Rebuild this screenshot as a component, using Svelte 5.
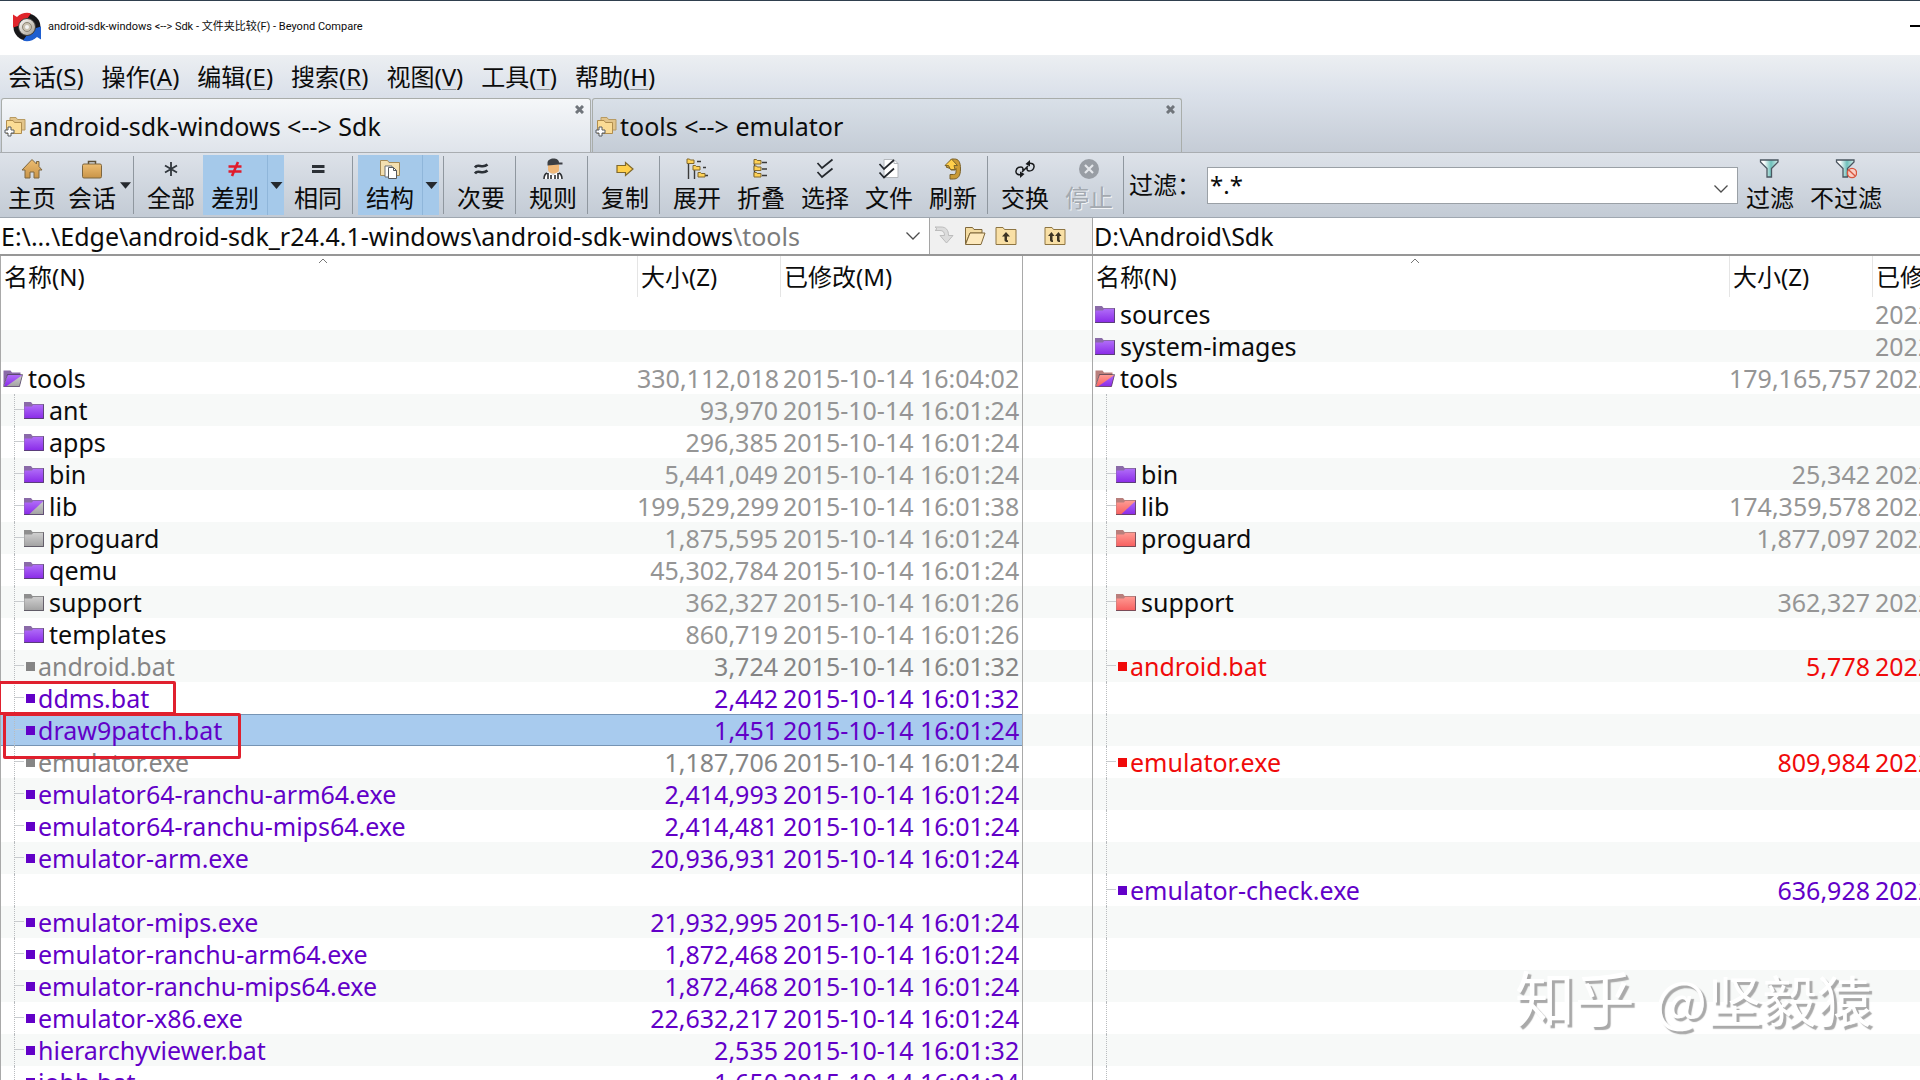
<script>
  const menus = [
    ['会话', 'S'], ['操作', 'A'], ['编辑', 'E'], ['搜索', 'R'],
    ['视图', 'V'], ['工具', 'T'], ['帮助', 'H']
  ];

  const tabs = [
    { title: 'android-sdk-windows <--> Sdk', active: true },
    { title: 'tools <--> emulator', active: false }
  ];

  const tools = [
    { icon: 'home', label: '主页' },
    { icon: 'case', label: '会话', narrow: true, arrow: 'small' },
    { sep: true },
    { icon: 'all', label: '全部' },
    { icon: 'diff', label: '差别', on: true, arrow: 'side' },
    { icon: 'same', label: '相同' },
    { sep: true },
    { icon: 'structure', label: '结构', on: true, arrow: 'side' },
    { sep: true },
    { icon: 'minor', label: '次要' },
    { sep: true },
    { icon: 'rules', label: '规则' },
    { sep: true },
    { icon: 'copy', label: '复制' },
    { sep: true },
    { icon: 'expand', label: '展开' },
    { icon: 'collapse', label: '折叠' },
    { icon: 'select', label: '选择' },
    { icon: 'files', label: '文件' },
    { icon: 'refresh', label: '刷新' },
    { sep: true },
    { icon: 'swap', label: '交换' },
    { icon: 'stop', label: '停止', disabled: true },
    { sep: true }
  ];

  const d = (t) => '2015-10-14 16:' + t;
  const dir = (name, kind, size, date) => ({ name, kind, size, date, level: 1 });
  const file = (name, tone, size, date, selected = false) => ({ name, tone, size, date, selected, level: 1 });
  const gap = { level: 1 };
  const none = { level: 0 };

  const left = [
    none,
    none,
    { name: 'tools', kind: 'purple-gray', open: true, size: '330,112,018', date: d('04:02'), level: 0 },
    dir('ant', 'purple', '93,970', d('01:24')),
    dir('apps', 'purple', '296,385', d('01:24')),
    dir('bin', 'purple', '5,441,049', d('01:24')),
    dir('lib', 'purple-gray', '199,529,299', d('01:38')),
    dir('proguard', 'gray', '1,875,595', d('01:24')),
    dir('qemu', 'purple', '45,302,784', d('01:24')),
    dir('support', 'gray', '362,327', d('01:26')),
    dir('templates', 'purple', '860,719', d('01:26')),
    file('android.bat', 'older', '3,724', d('01:32')),
    file('ddms.bat', 'orphan', '2,442', d('01:32')),
    file('draw9patch.bat', 'orphan', '1,451', d('01:24'), true),
    file('emulator.exe', 'older', '1,187,706', d('01:24')),
    file('emulator64-ranchu-arm64.exe', 'orphan', '2,414,993', d('01:24')),
    file('emulator64-ranchu-mips64.exe', 'orphan', '2,414,481', d('01:24')),
    file('emulator-arm.exe', 'orphan', '20,936,931', d('01:24')),
    gap,
    file('emulator-mips.exe', 'orphan', '21,932,995', d('01:24')),
    file('emulator-ranchu-arm64.exe', 'orphan', '1,872,468', d('01:24')),
    file('emulator-ranchu-mips64.exe', 'orphan', '1,872,468', d('01:24')),
    file('emulator-x86.exe', 'orphan', '22,632,217', d('01:24')),
    file('hierarchyviewer.bat', 'orphan', '2,535', d('01:32')),
    file('jobb.bat', 'orphan', '1,650', d('01:24'))
  ];

  const y = '2022';
  const right = [
    { name: 'sources', kind: 'purple', date: y, level: 0 },
    { name: 'system-images', kind: 'purple', date: y, level: 0 },
    { name: 'tools', kind: 'red-purple', open: true, size: '179,165,757', date: y, level: 0 },
    gap,
    gap,
    dir('bin', 'purple', '25,342', y),
    dir('lib', 'red-purple', '174,359,578', y),
    dir('proguard', 'red', '1,877,097', y),
    gap,
    dir('support', 'red', '362,327', y),
    gap,
    file('android.bat', 'newer', '5,778', y),
    gap,
    gap,
    file('emulator.exe', 'newer', '809,984', y),
    gap,
    gap,
    gap,
    file('emulator-check.exe', 'orphan', '636,928', y),
    gap,
    gap,
    gap,
    gap,
    gap,
    gap
  ];

  let filter = $state('*.*');
  let rightPath = $state('D:\\Android\\Sdk');
</script>

{#snippet folder(kind, open)}
  {@const a = kind.split('-')[0]}
  {@const b = kind.split('-')[1] ?? a}
  <svg class="folder" viewBox="0 0 20 17" aria-hidden="true">
    {#if open}
      <path d="M.5 16V.5h7l1.500 2H17.500V6H4Z" class="back-{a}" />
      <path d="M1 16 4.500 5h15L16.500 16.500H1Z" fill="url(#f-{a})" />
      <path d="M3 16.500 19.500 5 16.500 16.500Z" fill="url(#f-{b})" />
      <path d="M.5 16.500 4.500 4.500h15L16.500 16.500Z" class="edge" />
    {:else}
      <path d="M0 17V0h7l1.500 2H20v15Z" class="back-{a}" />
      <path d="M.5 4.500H8L9 3h10.500v13.500H.5Z" fill="url(#f-{a})" />
      {#if b !== a}<path d="M19.500 3v13.500H5Z" fill="url(#f-{b})" />{/if}
      <path d="M0 16.500H19.500V2.500" class="edge" />
    {/if}
  </svg>
{/snippet}

{#snippet chevron()}
  <svg class="chevron" viewBox="0 0 16 10" aria-hidden="true"><path d="M1.500 1.500 8 8l6.500-6.500" /></svg>
{/snippet}

{#snippet funnel()}
  <path d="M1.500 2h17.500v2l-6.500 6.500V19H8v-8.500L1.500 4Z" fill="url(#funnel)" stroke="#4b5660" stroke-width="1.300" />
{/snippet}

{#snippet icon(name)}
  <svg class="icon" viewBox="0 0 22 22" aria-hidden="true">
    {#if name === 'home'}
      <path d="M11 1.500 1 12h3v8h5v-6h4v6h5v-8h3l-3-3.500V3.500h-2.500v2.500Z" fill="url(#tan)" stroke="#7d6640" />
    {:else if name === 'case'}
      <path d="M7.500 6V3.500h7V6" fill="none" stroke="#5d5038" stroke-width="1.500" />
      <rect x="1.500" y="6" width="19" height="14" rx="1.500" fill="url(#tan)" stroke="#7d6640" />
    {:else if name === 'all'}
      <path d="M11 4v14M5 7.500l12 7M17 7.500l-12 7" stroke="#30363c" stroke-width="1.800" />
    {:else if name === 'diff'}
      <path d="M4.500 8.500h13M4.500 13.500h13M14 4 8 18" stroke="#e01b2c" stroke-width="2.600" />
    {:else if name === 'same'}
      <path d="M5 8.500h12.500M5 13.500h12.500" stroke="#2b3036" stroke-width="3" />
    {:else if name === 'structure'}
      <path d="M1.500 17.500v-15h7l1.500 2h10.500v13Z" fill="#f3dfb0" stroke="#a48a57" />
      <path d="M6 8h7v11H6Z" fill="#fff" stroke="#6d7175" />
      <path d="M9.500 9.500h5l3 3v8h-8Z" fill="#fff" stroke="#55595d" />
      <path d="M14.500 9.500v3h3" fill="none" stroke="#55595d" />
    {:else if name === 'minor'}
      <path d="M5 9.500c3-5 7 2 12.500-3M5 15.500c3-5 7 2 12.500-3" fill="none" stroke="#2b3036" stroke-width="2.600" />
    {:else if name === 'rules'}
      <path d="M6 6.500h11v5c0 3-3 4-5.500 4S6 14 6 11.500Z" fill="#f0b878" />
      <path d="M5.500 7.500V5c0-3 3-4.500 6-4.500S17 2 17 4.500h3.500v2H17Z" fill="#3c3f44" />
      <path d="M1.500 21c0-4 2-6 5.500-6.500l4 3 4-3c3.500.5 5.500 2.500 5.500 6.500Z" fill="#fff" />
      <path d="M2 21c0-3 1-5 3-6M6 21v-6M9 21v-4M13 21v-4M16 21v-6M20 21c0-3-1-5-3-6" fill="none" stroke="#2c2f33" stroke-width="1.600" />
    {:else if name === 'copy'}
      <path d="M3 7.500h8.500V4.500L19 11l-7.500 6.500v-3H3Z" fill="#ffcf4a" stroke="#80682b" stroke-width="1.200" />
    {:else if name === 'expand'}
      <path d="M2.500 5v16M8.500 12v9M11 3.500h4M17 9.500h3M19 17.500h3" fill="none" stroke="#3a3a3a" stroke-width="1.400" />
      <path d="M1 1h2.500l.8 1H8v3.500H1ZM7 7.500h2.500l.8 1H14V12H7ZM12 14.500h2.500l.8 1H19V19h-7Z" fill="#ffd257" stroke="#82692c" />
    {:else if name === 'collapse'}
      <path d="M4.500 5v13M12 4.500h5M12 11h5M12 17.500h5" fill="none" stroke="#3a3a3a" stroke-width="1.400" />
      <path d="M4 1.500h2.500l.8 1H11V6H4ZM4 8h2.500l.8 1H11v3.500H4ZM4 14.500h2.500l.8 1H11V19H4Z" fill="#ffd257" stroke="#82692c" />
    {:else if name === 'select'}
      <path d="m3.500 5 4.500 5L18.500 1.500M3.500 14l4.500 5L18.500 10.500" fill="none" stroke="#24282d" stroke-width="1.700" />
    {:else if name === 'files'}
      <path d="M6 1.500h10l4 4v14H6Z" fill="#fff" stroke="#b4b8bd" />
      <path d="M16 1.500v4h4" fill="none" stroke="#b4b8bd" />
      <path d="m1.500 6 4.500 5L16 2M1.500 14.500l4.500 5L16 10.500" fill="none" stroke="#24282d" stroke-width="1.700" />
    {:else if name === 'refresh'}
      <path d="M12.500 1c4 0 6 3 6 10s-2.500 10-7 10H8v-4.500h3.500c2 0 2.500-1 2.500-3v-3l-1 1.500H9l-1-1.500-4-1.500L9.500 1Z" fill="#c99a35" stroke="#7b6128" />
      <path d="M9.500 1 3 7.500h3.500l2 4h4.500l-1-4h3.500Z" fill="#ffcf4a" stroke="#80682b" />
    {:else if name === 'swap'}
      <path d="M14 5.500c3.500-1 6.500.5 6 3.500s-3 4-5 4-2.500-2-1.500-3.500M8 16.500c-3.500 1-6.500-.5-6-3.500s3-4 5-4 2.500 2 1.500 3.500M14 8l-6 6" fill="none" stroke="#17191b" stroke-width="1.500" />
      <path d="M11.500 6 16 2v6.500ZM10.500 16 6 20v-6.500Z" fill="#17191b" />
    {:else if name === 'stop'}
      <circle cx="11" cy="11" r="10" fill="#989da4" />
      <path d="m7 7 8 8M15 7l-8 8" stroke="#e4e7eb" stroke-width="2.200" />
    {:else if name === 'filter'}
      {@render funnel()}
    {:else if name === 'nofilter'}
      {@render funnel()}
      <circle cx="17" cy="15" r="4.600" fill="#f9cfc6" stroke="#d8563f" stroke-width="1.400" />
      <path d="m13.800 12 6.400 6" stroke="#d8563f" stroke-width="1.400" />
    {:else if name === 'tab'}
      <path d="M6 15V2.500h6l1.500 2H21V15Z" fill="#e2c48a" stroke="#b79a62" />
      <path d="M2.500 18.500V5.500H9l1.500 2h7v11Z" fill="#fbdc95" stroke="#b08d4e" />
      <path d="M4 12h3v3h3v3H7v3H4v-3H1v-3h3Z" fill="#fff" stroke="#555b61" />
    {:else if name === 'go'}
      <path d="M2 2h6c5 0 7.500 3 7.500 8.500H20L13.500 18 7 10.500h4.500C11.500 7 10 5.500 7 5.500H2l2-1.700Z" fill="#dcdcdc" stroke="#bcbcbc" />
    {:else if name === 'browse'}
      <path d="M1.500 19V2.500h7l1.500 2h8V8H6Z" fill="#f4dca2" stroke="#80683a" />
      <path d="M1.500 19.500 6 8h15l-4 11.500Z" fill="#fde9bd" stroke="#80683a" />
    {:else if name === 'up' || name === 'upboth'}
      <path d="M1 19.500v-17h7l1.500 2H21v15Z" fill="#f9e0a6" stroke="#8e7542" />
      {#if name === 'up'}
        <path d="m11 7-4 4.500h2.500V15c0 1.500 1 2 3.500 2v-1.800h-1v-3.700h3Z" fill="#3d3424" />
      {:else}
        <path d="m7.500 7-3.500 4h2v4c0 1.500 1 2 3 2v-1.800h-.5V11h2ZM14.500 7 11 11h2v4c0 1.500 1 2 3 2v-1.800h-.5V11h2Z" fill="#3d3424" />
      {/if}
    {/if}
  </svg>
{/snippet}

{#snippet pane(rows, label)}
  <div class="pane">
    <svg class="sort" viewBox="0 0 10 6" aria-hidden="true"><path d="M1 5l4-4 4 4" /></svg>
    <table aria-label={label}>
      <colgroup><col /><col class="c-size" /><col class="c-date" /></colgroup>
      <thead>
        <tr><th scope="col">名称(N)</th><th scope="col">大小(Z)</th><th scope="col">已修改(M)</th></tr>
      </thead>
      <tbody>
        {#each rows as r}
          <tr class={r.tone ?? 'dir'} class:selected={r.selected}>
            <td>
              <div class="name">
                {#if r.level}<span class="guide" class:branch={r.name}></span>{/if}
                {#if r.kind}{@render folder(r.kind, r.open)}{:else if r.name}<span class="dot"></span>{/if}
                <span>{r.name ?? ''}</span>
              </div>
            </td>
            <td class="size">{r.size ?? ''}</td>
            <td class="date">{r.date ?? ''}</td>
          </tr>
        {/each}
      </tbody>
    </table>
  </div>
{/snippet}

<svg class="defs" aria-hidden="true">
  <defs>
    <linearGradient id="f-purple" x1="0" y1="0" x2="0" y2="1"><stop offset="0" stop-color="#b06cf8" /><stop offset="1" stop-color="#8a2be8" /></linearGradient>
    <linearGradient id="f-gray" x1="0" y1="0" x2="0" y2="1"><stop offset="0" stop-color="#cfcfcf" /><stop offset="1" stop-color="#a2a2a2" /></linearGradient>
    <linearGradient id="f-red" x1="0" y1="0" x2="0" y2="1"><stop offset="0" stop-color="#ff9a92" /><stop offset="1" stop-color="#f75f5f" /></linearGradient>
    <linearGradient id="tan" x1="0" y1="0" x2="0" y2="1"><stop offset="0" stop-color="#edbd72" /><stop offset="1" stop-color="#c99447" /></linearGradient>
    <linearGradient id="funnel" x1="0" y1="0" x2="1" y2="0"><stop offset="0.200" stop-color="#fff" /><stop offset="0.600" stop-color="#6fc0bb" /><stop offset="1" stop-color="#d6efec" /></linearGradient>
    <linearGradient id="disc" x1="0" y1="0" x2="1" y2="1"><stop offset="0" stop-color="#fff" /><stop offset="1" stop-color="#a39a88" /></linearGradient>
  </defs>
</svg>

<div class="app">
  <header class="titlebar">
    <svg class="logo" viewBox="0 0 28 30" aria-hidden="true">
      <circle cx="14" cy="15" r="13.500" fill="#17171a" />
      <path d="M0 2.500 4 5C8 1 14 0 18 1.500L14 7C9 7 7 10 6.500 13.500L0 15.500Z" fill="#e0252b" />
      <path d="M28 27.500 24 25c-4 4-10 5-14 3.500L14 23c5 0 7-3 7.500-6.500L28 14.500Z" fill="#1f5fd0" />
      <circle cx="14" cy="15" r="8.500" fill="url(#disc)" stroke="#3c3a38" />
      <circle cx="14" cy="15" r="4.500" fill="#c9c2b2" stroke="#8b8474" />
      <circle cx="14" cy="15" r="2" fill="#f4f4f4" />
    </svg>
    <h1>android-sdk-windows &lt;--&gt; Sdk - 文件夹比较(F) - Beyond Compare</h1>
    <button class="minimize" aria-label="最小化"></button>
  </header>

  <div class="strip">
    <nav class="menu">
      {#each menus as [label, key]}
        <button>{label}(<u>{key}</u>)</button>
      {/each}
    </nav>
    <div class="tabs" role="tablist">
      {#each tabs as t}
        <div class="tab" class:active={t.active}>
          <button class="tab-title" role="tab" aria-selected={t.active}>{@render icon('tab')}{t.title}</button>
          <button class="close" aria-label="关闭">
            <svg viewBox="0 0 9 9" aria-hidden="true"><path d="m1 1 7 7M8 1 1 8" /></svg>
          </button>
        </div>
      {/each}
    </div>
  </div>

  <div class="toolbar" role="toolbar">
    {#each tools as t}
      {#if t.sep}
        <span class="sep"></span>
      {:else}
        <div class="tool" class:on={t.on}>
          <button class="tool-main" class:narrow={t.narrow} disabled={t.disabled}>{@render icon(t.icon)}{t.label}</button>
          {#if t.arrow}
            <button class="arrow {t.arrow}" aria-label="{t.label}选项">
              <svg viewBox="0 0 12 7" aria-hidden="true"><path d="M0 0h12L6 7Z" /></svg>
            </button>
          {/if}
        </div>
      {/if}
    {/each}
    <label for="filter">过滤：</label>
    <div class="filter">
      <input id="filter" bind:value={filter} />
      <button aria-label="过滤列表">{@render chevron()}</button>
    </div>
    <button class="tool-main">{@render icon('filter')}过滤</button>
    <button class="tool-main wide">{@render icon('nofilter')}不过滤</button>
  </div>

  <div class="paths columns">
    <div class="path-left">
      <button class="path" aria-haspopup="listbox">
        <span>E:\...\Edge\android-sdk_r24.4.1-windows\android-sdk-windows<span class="dim">\tools</span></span>
        {@render chevron()}
      </button>
      <div class="path-tools">
        <button disabled aria-label="转到">{@render icon('go')}</button>
        <button aria-label="浏览">{@render icon('browse')}</button>
        <button aria-label="上一级">{@render icon('up')}</button>
      </div>
    </div>
    <div class="both"><button aria-label="两侧上一级">{@render icon('upboth')}</button></div>
    <input class="path-right" aria-label="右侧文件夹" bind:value={rightPath} />
  </div>

  <main class="columns">
    {@render pane(left, '左侧文件夹')}
    <div class="gutter"></div>
    {@render pane(right, '右侧文件夹')}
    <div class="mark mark-ddms"></div>
    <div class="mark mark-draw"></div>
  </main>

  <div class="watermark"><span class="brand">知乎</span> @坚毅猿</div>
</div>

<style>
  :global(body) {
    margin: 0;
    background: #fff;
  }
  .app {
    position: relative;
    display: flex;
    flex-direction: column;
    height: 100vh;
    overflow: hidden;
    font-family: "Noto Sans", "Noto Sans CJK SC", sans-serif;
    font-size: 24px;
    line-height: 32px;
    color: #0c0c0c;
  }
  .defs {
    position: absolute;
    width: 0;
    height: 0;
  }
  button,
  input {
    margin: 0;
    padding: 0;
    border: 0;
    border-radius: 0;
    outline: 0;
    background: none;
    color: inherit;
    font: inherit;
  }
  .icon {
    display: block;
    flex: none;
    width: 22px;
    height: 22px;
  }

  .titlebar {
    box-sizing: border-box;
    flex: none;
    display: flex;
    align-items: flex-start;
    gap: 7px;
    height: 55px;
    padding: 11px 0 0 13px;
    border-top: 1px solid #2f3f4e;
    background: #fff;
  }
  .logo {
    width: 28px;
    height: 30px;
  }
  h1 {
    flex: 1;
    margin: 0;
    font-family: Roboto, "Noto Sans CJK SC", sans-serif;
    font-size: 11px;
    font-weight: 400;
    line-height: 30px;
  }
  .minimize {
    width: 10px;
    height: 15px;
    border-bottom: 2px solid #000;
  }

  .strip {
    flex: none;
    background: linear-gradient(#eceff2, #dbe1ea 40%, #c5ccd6);
    border-bottom: 1px solid #a9adb1;
  }
  .menu {
    display: flex;
    gap: 18px;
    padding: 6px 8px 5px;
  }
  .menu u {
    text-decoration-color: #8a9096;
    text-decoration-thickness: 1px;
    text-underline-offset: 3px;
  }
  .tabs {
    display: flex;
    gap: 1px;
    padding-left: 1px;
  }
  .tab {
    box-sizing: border-box;
    display: flex;
    justify-content: space-between;
    align-items: flex-start;
    width: 590px;
    height: 54px;
    padding: 0 4px 0 2px;
    border: 1px solid #a9adaa;
    border-bottom: 0;
    border-radius: 3px 3px 0 0;
    background: linear-gradient(#d9e0e8, #c4ccd6);
  }
  .tab.active {
    margin-bottom: -1px;
    background: linear-gradient(#f5f7f9, #dfe4eb);
  }
  .tab-title {
    display: flex;
    align-items: center;
    gap: 3px;
    height: 54px;
    font-size: 25px;
    white-space: pre;
  }
  .close {
    width: 14px;
    height: 20px;
  }
  .close svg {
    display: block;
    width: 9px;
    height: 9px;
    margin: auto;
  }
  .close path {
    stroke: #70757b;
    stroke-width: 3;
  }

  .toolbar {
    box-sizing: border-box;
    flex: none;
    display: flex;
    align-items: center;
    height: 65px;
    padding-right: 30px;
    border-bottom: 1px solid #9fa7b0;
    background: linear-gradient(#dde2e9, #c3cbd5);
  }
  .tool {
    display: flex;
  }
  .tool-main {
    display: flex;
    flex-direction: column;
    align-items: center;
    flex: none;
    gap: 2px;
    width: 64px;
    height: 60px;
    padding-top: 3px;
    box-sizing: border-box;
    white-space: nowrap;
  }
  .tool-main.narrow {
    width: 56px;
  }
  .tool-main.wide {
    width: 88px;
  }
  .tool-main:disabled {
    color: #a3a9b0;
    text-shadow: 1px 1px #f1f3f5;
  }
  .on .tool-main,
  .on .arrow {
    background: #a5c9ea;
  }
  .arrow {
    display: flex;
    align-items: center;
    justify-content: center;
    width: 11px;
  }
  .arrow svg {
    flex: none;
    width: 11px;
    height: 7px;
    fill: #25292e;
  }
  .arrow.side {
    box-sizing: border-box;
    width: 17px;
    margin-right: 2px;
    border-left: 1px solid #8fb6da;
  }
  .arrow.side svg {
    width: 13px;
  }
  .sep {
    flex: none;
    box-sizing: border-box;
    width: 6px;
    height: 58px;
    margin-left: 2px;
    border-left: 1px solid #8f979f;
  }
  .toolbar label {
    flex: none;
    width: 78px;
    white-space: nowrap;
  }
  .filter {
    box-sizing: border-box;
    display: flex;
    flex: 1;
    height: 37px;
    min-width: 0;
    border: 1px solid #9aa0a6;
    background: #fff;
  }
  .filter input {
    flex: 1;
    min-width: 0;
    padding-left: 2px;
  }
  .filter button {
    width: 32px;
  }
  .chevron {
    flex: none;
    width: 16px;
    height: 10px;
    fill: none;
    stroke: #4d4d4d;
    stroke-width: 1.3;
  }

  .columns {
    display: grid;
    grid-template-columns: minmax(0, 1023fr) 69px minmax(0, 828fr);
  }
  .paths {
    flex: none;
    height: 36px;
    border-bottom: 2px solid #979797;
    background: #f0f0f0;
    font-size: 25px;
  }
  .path-left {
    display: flex;
    min-width: 0;
  }
  .path {
    flex: 1;
    display: flex;
    align-items: center;
    justify-content: space-between;
    min-width: 0;
    padding: 0 8px 0 1px;
    border-right: 1px solid #a5a5a5;
    background: #fff;
    white-space: nowrap;
  }
  .dim {
    color: #7c7c7c;
  }
  .path-tools {
    display: flex;
    gap: 3px;
    width: 93px;
  }
  .path-tools button {
    display: flex;
    align-items: center;
    justify-content: center;
    width: 28px;
  }
  .both {
    display: flex;
    justify-content: center;
    align-items: center;
    padding-right: 6px;
  }
  .path-right {
    min-width: 0;
    padding-left: 1px;
    border-left: 1px solid #a5a5a5;
    background: #fff;
  }

  main {
    position: relative;
    flex: 1;
    min-height: 0;
    overflow: hidden;
    font-size: 25px;
  }
  .pane {
    position: relative;
    min-width: 0;
    overflow: hidden;
    border-left: 1px solid #a9a9a9;
  }
  .pane:first-child {
    border-right: 1px solid #a9a9a9;
  }
  .gutter {
    background: repeating-linear-gradient(#fff 0 32px, #f7f9f8 32px 64px) 0 42px no-repeat;
  }
  .sort {
    position: absolute;
    top: 2px;
    left: 317px;
    width: 10px;
    height: 6px;
    fill: none;
    stroke: #777;
  }
  table {
    width: 100%;
    min-width: 1022px;
    table-layout: fixed;
    border-collapse: collapse;
  }
  .c-size {
    width: 143px;
  }
  .c-date {
    width: 243px;
  }
  th {
    height: 42px;
    box-sizing: border-box;
    padding: 0 0 0 4px;
    font-size: 24px;
    font-weight: 400;
    text-align: left;
    white-space: nowrap;
    background: linear-gradient(#e5e5e5, #e5e5e5) 0 0 / 1px 41px no-repeat;
  }
  th:first-child {
    padding-left: 3px;
    background: none;
  }
  td {
    height: 32px;
    padding: 0;
    white-space: nowrap;
  }
  tbody tr:nth-child(even) {
    background: #f7f9f8;
  }
  tbody tr.selected {
    background: #a8cbee;
    box-shadow: inset 0 1px #7694b4, inset 0 -1px #7694b4;
  }
  .size {
    padding-right: 2px;
    text-align: right;
  }
  .date {
    padding-left: 3px;
  }
  .name {
    display: flex;
    align-items: center;
    height: 32px;
    padding-left: 2px;
  }
  .folder {
    flex: none;
    width: 20px;
    height: 17px;
    margin-right: 5px;
  }
  .edge {
    fill: none;
    stroke: #3c3448;
    stroke-opacity: 0.6;
  }
  .back-purple {
    fill: #8a6aa8;
  }
  .back-gray {
    fill: #8f8f8f;
  }
  .back-red {
    fill: #b97f7c;
  }
  .guide {
    flex: none;
    box-sizing: border-box;
    width: 10px;
    height: 32px;
    margin-left: 11px;
    border-left: 1px dotted #b9bcbf;
  }
  .branch {
    background: linear-gradient(#c9cccf, #c9cccf) 0 15px / 10px 1px no-repeat;
  }
  .dot {
    flex: none;
    width: 9px;
    height: 9px;
    margin: 0 3px 0 2px;
    background: currentColor;
  }
  .dir .size,
  .dir .date {
    color: #959595;
  }
  .older {
    color: #858585;
  }
  .orphan {
    color: #6200c8;
  }
  .newer {
    color: #f00a0a;
  }
  .mark {
    position: absolute;
    box-sizing: border-box;
    border: 3px solid #e0202e;
    border-radius: 2px;
  }
  .mark-ddms {
    top: 425px;
    left: -2px;
    width: 178px;
    height: 34px;
  }
  .mark-draw {
    top: 457px;
    left: 3px;
    width: 238px;
    height: 46px;
  }
  .watermark {
    position: absolute;
    right: 48px;
    bottom: 46px;
    color: #fff;
    font-family: "Noto Sans CJK SC", sans-serif;
    font-size: 55px;
    line-height: 72px;
    text-shadow: 3px 3px 1px #a9a9a9;
    white-space: pre;
    pointer-events: none;
  }
  .brand {
    margin-right: 8px;
    font-size: 60px;
  }
</style>
